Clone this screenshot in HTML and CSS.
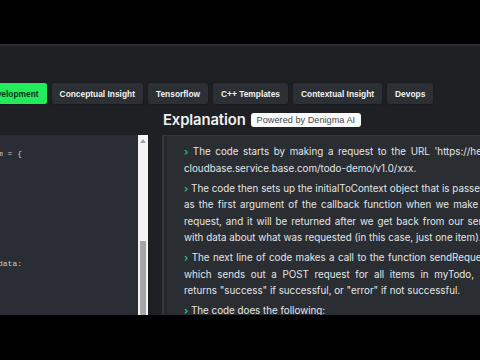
FILE: index.html
```html
<!DOCTYPE html>
<html>
<head>
<meta charset="utf-8">
<link rel="stylesheet" href="styles.css">
</head>
<body>
<div class="bar"></div>
<div class="app">
  <nav class="tabs">
    <span class="tab active">Development</span>
    <span class="tab">Conceptual Insight</span>
    <span class="tab">Tensorflow</span>
    <span class="tab">C++ Templates</span>
    <span class="tab">Contextual Insight</span>
    <span class="tab">Devops</span>
  </nav>
  <div class="main">
    <section class="left">
      <div class="editor">
        <pre class="code">const initialTodoItem = {






    todo.send(item, data:</pre>
        <div class="scrollbar">
          <span class="arrow"></span>
          <span class="thumb"></span>
        </div>
      </div>
    </section>
    <section class="right">
      <header class="head">
        <h2>Explanation</h2>
        <span class="badge">Powered by Denigma AI</span>
      </header>
      <div class="panel">
        <div class="text">
          <p><span class="ln"><b class="chev">›</b> The code starts by making a request to the URL 'https://hello-</span><span class="ln last">cloudbase.service.base.com/todo-demo/v1.0/xxx.</span></p>
          <p><span class="ln"><b class="chev">›</b> The code then sets up the initialToContext object that is passed in</span><span class="ln">as the first argument of the callback function when we make the</span><span class="ln">request, and it will be returned after we get back from our server</span><span class="ln last">with data about what was requested (in this case, just one item).</span></p>
          <p><span class="ln"><b class="chev">›</b> The next line of code makes a call to the function sendRequest()</span><span class="ln">which sends out a POST request for all items in myTodo, and</span><span class="ln last">returns "success" if successful, or "error" if not successful.</span></p>
          <p><span class="ln last"><b class="chev">›</b> The code does the following:</span></p>
        </div>
      </div>
    </section>
  </div>
</div>
<div class="bar"></div>
</body>
</html>
```

FILE: styles.css
```css
html, body {
  margin: 0;
  padding: 0;
  background: #000;
  width: 480px;
  height: 360px;
  overflow: hidden;
}

.bar {
  height: 44px;
  background: #000;
}

.app {
  height: 271px;
  background: #1e2023;
  border-top: 2px solid #2a2c2f;
  box-sizing: border-box;
  overflow: hidden;
  display: flex;
  flex-direction: column;
}

.tabs {
  display: flex;
  gap: 5px;
  margin: 37px 0 0 -22px;
  white-space: nowrap;
}

.tab {
  height: 21px;
  display: flex;
  align-items: center;
  padding: 0 8px;
  background: #2c2f33;
  color: #f2f2f2;
  font: bold 8.4px "Liberation Sans", Arial, sans-serif;
  border-radius: 2px;
  box-shadow: 0 0 2px rgba(0,0,0,0.4);
}

.tab.active {
  background: #22ec5c;
  color: #0d3318;
}

.main {
  flex: 1;
  display: flex;
  gap: 14px;
  min-height: 0;
}

.left {
  width: 148px;
  flex: none;
  padding-top: 31px;
  display: flex;
  flex-direction: column;
}

.editor {
  flex: 1;
  display: flex;
  background: #2a2d33;
  min-height: 0;
}

.code {
  flex: 1;
  margin: 0 0 0 -98px;
  padding-top: 11px;
  font: 8px/15.7px "Liberation Mono", "DejaVu Sans Mono", monospace;
  color: #c9cbcf;
  overflow: hidden;
  white-space: pre;
}

.scrollbar {
  width: 10px;
  flex: none;
  background: #f4f4f4;
  display: flex;
  flex-direction: column;
  align-items: center;
  padding-top: 4px;
  box-sizing: border-box;
}

.arrow {
  width: 0;
  height: 0;
  border-left: 3px solid transparent;
  border-right: 3px solid transparent;
  border-bottom: 4px solid #a3a3a3;
}

.thumb {
  margin-top: 98px;
  width: 6px;
  flex: 1;
  background: #a6a6a6;
}

.right {
  flex: 1;
  min-width: 0;
  display: flex;
  flex-direction: column;
}

.head {
  height: 31px;
  display: flex;
  align-items: center;
  gap: 5px;
  padding-left: 1px;
}

.head h2 {
  margin: 0;
  font: 600 14.8px Inter, "Noto Sans", sans-serif;
  color: #f1f1f1;
  letter-spacing: -0.1px;
}

.badge {
  background: #fafafa;
  color: #4a4a4a;
  font: 9.2px "Liberation Sans", Arial, sans-serif;
  padding: 0 6px;
  height: 14px;
  line-height: 14px;
  border-radius: 3px;
}

.panel {
  flex: 1;
  background: #2a2d32;
  border-left: 2px solid #34373c;
  border-top: 1px solid #34373c;
  box-shadow: inset 3px 0 0 #23262a;
  padding: 8px 0 0 20px;
  overflow: hidden;
}

.text {
  width: 313px;
  font: 9.8px/16.5px Inter, "Noto Sans", sans-serif;
  color: #e4e5e7;
}

.text p {
  margin: 0 0 3.5px;
}

.ln {
  display: block;
  white-space: nowrap;
  text-align: justify;
  text-align-last: justify;
}

.ln.last {
  text-align-last: left;
}

.chev {
  color: #2bbf73;
  font-weight: 700;
}
```
